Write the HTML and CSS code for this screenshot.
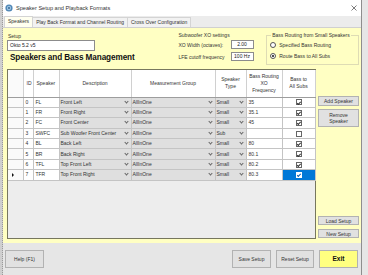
FILE: index.html
```html
<!DOCTYPE html>
<html lang="en">
<head>
    <meta charset="UTF-8">
    <title>Speaker Setup and Playback Formats</title>
    <link rel="stylesheet" href="styles.css">
</head>
<body>
<div class="screen">
    <div class="edge-left"></div>
    <div class="window">
        <div class="titlebar">
            <svg class="app-icon" width="8" height="8" viewBox="0 0 8 8">
                <circle cx="4" cy="4" r="3.6" fill="#4f86b5"/>
                <circle cx="4" cy="4" r="2.2" fill="#9cc3e2"/>
                <circle cx="4" cy="4" r="0.9" fill="#2f5f8a"/>
            </svg>
            <span class="title">Speaker Setup and Playback Formats</span>
            <svg class="close" width="6" height="6" viewBox="0 0 6 6">
                <path d="M0.5 0.5 L5.5 5.5 M5.5 0.5 L0.5 5.5" stroke="#444" stroke-width="0.7"/>
            </svg>
        </div>

        <div class="tabs">
            <div class="tab active">Speakers</div>
            <div class="tab">Play Back Format and Channel Routing</div>
            <div class="tab">Cross Over Configuration</div>
        </div>

        <div class="panel">
            <div class="top">
                <div class="setup">
                    <div class="label">Setup</div>
                    <div class="textbox setup-name">Okto 5.2 v5</div>
                    <h1>Speakers and Bass Management</h1>
                </div>

                <div class="xo-group">
                    <div class="label">Subwoofer XO settings</div>
                    <div class="xo-row first">
                        <span class="xo-label">XO Width (octaves):</span>
                        <span class="textbox small-box">2.00</span>
                    </div>
                    <div class="xo-row">
                        <span class="xo-label">LFE cutoff frequency</span>
                        <span class="textbox small-box">100 Hz</span>
                    </div>
                </div>

                <fieldset class="routing-group">
                    <legend>Bass Routing from Small Speakers</legend>
                    <div class="radio-row first"><span class="radio"></span>Specified Bass Routing</div>
                    <div class="radio-row"><span class="radio checked"></span>Route Bass to All Subs</div>
                </fieldset>
            </div>

            <div class="main">
                <div class="grid-box">
                    <table class="grid">
                        <colgroup>
                            <col style="width:15px">
                            <col style="width:10px">
                            <col style="width:26px">
                            <col style="width:72px">
                            <col style="width:84px">
                            <col style="width:31px">
                            <col style="width:36px">
                            <col style="width:33px">
                        </colgroup>
                        <thead>
                            <tr>
                                <th class="rh"></th>
                                <th class="left">ID</th>
                                <th class="left">Speaker</th>
                                <th>Description</th>
                                <th>Measurement Group</th>
                                <th>Speaker<br>Type</th>
                                <th>Bass Routing<br>XO<br>Frequency</th>
                                <th>Bass to<br>All Subs</th>
                            </tr>
                        </thead>
                        <tbody>
                            <tr>
                                <td class="rh"></td><td>0</td><td>FL</td>
                                <td class="combo"><div class="cb"><span>Front Left</span><i class="dd"></i></div></td>
                                <td class="combo"><div class="cb"><span>AllInOne</span><i class="dd"></i></div></td>
                                <td class="combo"><div class="cb"><span>Small</span><i class="dd"></i></div></td>
                                <td>35</td>
                                <td class="chk"><span class="box on"></span></td>
                            </tr>
                            <tr>
                                <td class="rh"></td><td>1</td><td>FR</td>
                                <td class="combo"><div class="cb"><span>Front Right</span><i class="dd"></i></div></td>
                                <td class="combo"><div class="cb"><span>AllInOne</span><i class="dd"></i></div></td>
                                <td class="combo"><div class="cb"><span>Small</span><i class="dd"></i></div></td>
                                <td>35.1</td>
                                <td class="chk"><span class="box on"></span></td>
                            </tr>
                            <tr>
                                <td class="rh"></td><td>2</td><td>FC</td>
                                <td class="combo"><div class="cb"><span>Front Center</span><i class="dd"></i></div></td>
                                <td class="combo"><div class="cb"><span>AllInOne</span><i class="dd"></i></div></td>
                                <td class="combo"><div class="cb"><span>Small</span><i class="dd"></i></div></td>
                                <td>45</td>
                                <td class="chk"><span class="box on"></span></td>
                            </tr>
                            <tr>
                                <td class="rh"></td><td>3</td><td>SWFC</td>
                                <td class="combo"><div class="cb"><span>Sub Woofer Front Center</span><i class="dd"></i></div></td>
                                <td class="combo"><div class="cb"><span>AllInOne</span><i class="dd"></i></div></td>
                                <td class="combo"><div class="cb"><span>Sub</span><i class="dd"></i></div></td>
                                <td></td>
                                <td class="chk"><span class="box"></span></td>
                            </tr>
                            <tr>
                                <td class="rh"></td><td>4</td><td>BL</td>
                                <td class="combo"><div class="cb"><span>Back Left</span><i class="dd"></i></div></td>
                                <td class="combo"><div class="cb"><span>AllInOne</span><i class="dd"></i></div></td>
                                <td class="combo"><div class="cb"><span>Small</span><i class="dd"></i></div></td>
                                <td>80</td>
                                <td class="chk"><span class="box on"></span></td>
                            </tr>
                            <tr>
                                <td class="rh"></td><td>5</td><td>BR</td>
                                <td class="combo"><div class="cb"><span>Back Right</span><i class="dd"></i></div></td>
                                <td class="combo"><div class="cb"><span>AllInOne</span><i class="dd"></i></div></td>
                                <td class="combo"><div class="cb"><span>Small</span><i class="dd"></i></div></td>
                                <td>80.1</td>
                                <td class="chk"><span class="box on"></span></td>
                            </tr>
                            <tr>
                                <td class="rh"></td><td>6</td><td>TFL</td>
                                <td class="combo"><div class="cb"><span>Top Front Left</span><i class="dd"></i></div></td>
                                <td class="combo"><div class="cb"><span>AllInOne</span><i class="dd"></i></div></td>
                                <td class="combo"><div class="cb"><span>Small</span><i class="dd"></i></div></td>
                                <td>80.2</td>
                                <td class="chk"><span class="box on"></span></td>
                            </tr>
                            <tr>
                                <td class="rh current"><span class="pointer"></span></td><td>7</td><td>TFR</td>
                                <td class="combo"><div class="cb"><span>Top Front Right</span><i class="dd"></i></div></td>
                                <td class="combo"><div class="cb"><span>AllInOne</span><i class="dd"></i></div></td>
                                <td class="combo"><div class="cb"><span>Small</span><i class="dd"></i></div></td>
                                <td>80.3</td>
                                <td class="chk selected"><span class="box on"></span></td>
                            </tr>
                        </tbody>
                    </table>
                </div>

                <div class="side">
                    <div class="btn add">Add Speaker</div>
                    <div class="btn remove">Remove<br>Speaker</div>
                    <div class="btn load">Load Setup</div>
                    <div class="btn new">New Setup</div>
                </div>
            </div>
        </div>

        <div class="footer">
            <div class="btn big">Help (F1)</div>
            <div class="spacer"></div>
            <div class="btn big">Save Setup</div>
            <div class="btn big reset">Reset Setup</div>
            <div class="btn big exit">Exit</div>
        </div>
    </div>
    <div class="edge-right"></div>
</div>
</body>
</html>
```

FILE: styles.css
```css
* {
    box-sizing: border-box;
}
body {
    margin: 0;
    font-family: "Liberation Sans", Arial, sans-serif;
    font-size: 5px;
    color: #333;
    background: #d6d6d6;
}
.screen {
    display: flex;
    width: 368px;
    height: 275px;
    overflow: hidden;
}
.edge-left {
    width: 3px;
    background: #cfcfcf;
    border-right: 1px dotted #9a9a9a;
}
.window {
    width: 359px;
    display: flex;
    flex-direction: column;
    background: #f0f0f0;
    border-right: 1px solid #8e8e8e;
}
.edge-right {
    flex: 1;
    background: #e6e6e6;
}

/* title bar */
.titlebar {
    height: 16px;
    background: #fff;
    display: flex;
    align-items: center;
    padding: 0 3px 0 2px;
}
.app-icon {
    margin-right: 3px;
}
.title {
    font-size: 5.6px;
    color: #333;
    flex: 1;
}
.close {
    margin-right: 1px;
}

/* tabs */
.tabs {
    height: 12px;
    display: flex;
    align-items: flex-end;
    padding-left: 1px;
    background: #ececec;
    border-bottom: 1px solid #d0d0d0;
}
.tab {
    height: 10px;
    line-height: 9px;
    padding: 0 3px;
    border: 1px solid #d4d4d4;
    border-bottom: none;
    background: #f2f2f2;
    color: #333;
    margin-right: -1px;
}
.tab.active {
    height: 11px;
    background: #fffff0;
    position: relative;
    z-index: 1;
}

/* yellow tab page */
.panel {
    flex: 1;
    background: #ffffc3;
    padding: 0 2px 3px 4px;
    display: flex;
    flex-direction: column;
}
.top {
    height: 41px;
    display: flex;
}
.label {
    line-height: 7px;
    color: #333;
}
.setup {
    width: 169px;
    padding-top: 5px;
    padding-left: 1px;
}
.textbox {
    background: #fff;
    border: 1px solid #8c8c8c;
    color: #222;
}
.setup-name {
    width: 88px;
    height: 11px;
    line-height: 9px;
    padding-left: 2px;
    margin-left: -1px;
}
h1 {
    margin: 1px 0 0 2px;
    font-size: 8.2px;
    line-height: 12px;
    letter-spacing: -0.1px;
    color: #111;
}
.xo-group {
    width: 87px;
    padding: 4px 0 0 3px;
}
.xo-row {
    display: flex;
    align-items: center;
    height: 9px;
    margin-top: 3px;
}
.xo-row.first {
    margin-top: 1px;
}
.xo-label {
    width: 52px;
}
.small-box {
    width: 23px;
    height: 9px;
    line-height: 7px;
    text-align: center;
}
.routing-group {
    width: 93px;
    height: 33px;
    margin: 4px 0 0 4px;
    padding: 0 3px;
    min-width: 0;
    border: 1px solid #dedcb4;
}
.routing-group legend {
    padding: 0 1px;
    margin-left: 1px;
    line-height: 6px;
    color: #333;
}
.radio-row {
    display: flex;
    align-items: center;
    height: 8px;
    margin-top: 3px;
}
.radio {
    width: 6px;
    height: 6px;
    border: 1px solid #555;
    border-radius: 50%;
    background: #fff;
    margin-right: 3px;
    display: flex;
    align-items: center;
    justify-content: center;
}
.radio.checked::after {
    content: "";
    width: 2px;
    height: 2px;
    border-radius: 50%;
    background: #111;
}

/* grid */
.main {
    height: 170px;
    display: flex;
}
.grid-box {
    width: 309px;
    height: 170px;
    border: 1px solid #77775e;
    background: #ededed;
}
.grid {
    width: 307px;
    table-layout: fixed;
    border-collapse: collapse;
}
.grid th {
    height: 27px;
    font-weight: normal;
    background: #fff;
    line-height: 7px;
    text-align: center;
    border-right: 1px solid #d0d0d0;
    border-bottom: 1px solid #9d9d9d;
    padding: 0;
    color: #333;
}
.grid th.left {
    text-align: left;
    padding-left: 3px;
}
.grid td {
    height: 10.4px;
    padding: 0 0 0 2px;
    background: #fff;
    border-right: 1px solid #c4c4c4;
    border-bottom: 1px solid #c4c4c4;
    white-space: nowrap;
    overflow: hidden;
    line-height: 9px;
}
.grid .rh {
    background: #fafafa;
    padding: 0;
}
.grid td.combo {
    background: #dfdfdf;
    padding-left: 1px;
}
.cb {
    display: flex;
    align-items: center;
    justify-content: space-between;
}
.dd {
    width: 3px;
    height: 3px;
    border-right: 0.7px solid #666;
    border-bottom: 0.7px solid #666;
    transform: rotate(45deg);
    margin: 0 3px 2px 0;
}
.grid td.chk {
    text-align: center;
    padding: 0;
}
.box {
    display: inline-block;
    vertical-align: middle;
    width: 6px;
    height: 6px;
    border: 1px solid #666;
    background: #fff;
    position: relative;
}
.box.on::after {
    content: "";
    position: absolute;
    left: 1.4px;
    top: 0.2px;
    width: 1.4px;
    height: 2.8px;
    border-right: 0.7px solid #333;
    border-bottom: 0.7px solid #333;
    transform: rotate(45deg);
}
.grid td.selected {
    background: #0078d7;
}
.selected .box {
    border-color: #fff;
}
.selected .box.on::after {
    border-color: #0a5fb0;
}
.pointer {
    display: block;
    width: 0;
    height: 0;
    margin-left: 4px;
    border-top: 2px solid transparent;
    border-bottom: 2px solid transparent;
    border-left: 2px solid #111;
}

/* buttons */
.btn {
    background: #e1e1e1;
    border: 1px solid #b2b2b2;
    color: #333;
    text-align: center;
    display: flex;
    align-items: center;
    justify-content: center;
    line-height: 6px;
}
.side {
    width: 42px;
    margin-left: 2px;
    display: flex;
    flex-direction: column;
}
.side .add {
    margin-top: 27px;
    height: 10px;
}
.side .remove {
    margin-top: 3px;
    height: 18px;
}
.side .load {
    margin-top: auto;
    height: 9px;
}
.side .new {
    margin-top: 4px;
    height: 9px;
    margin-bottom: 1px;
}
.footer {
    height: 32px;
    background: #e6e6e6;
    display: flex;
    align-items: flex-start;
    padding: 7px 3px 0 2px;
}
.spacer {
    flex: 1;
}
.btn.big {
    width: 39px;
    height: 18px;
}
.btn.reset {
    width: 38px;
    margin-left: 5px;
}
.btn.exit {
    margin-left: 5px;
    background: #ffff80;
    font-weight: bold;
    font-size: 6.6px;
    color: #111;
}
```
